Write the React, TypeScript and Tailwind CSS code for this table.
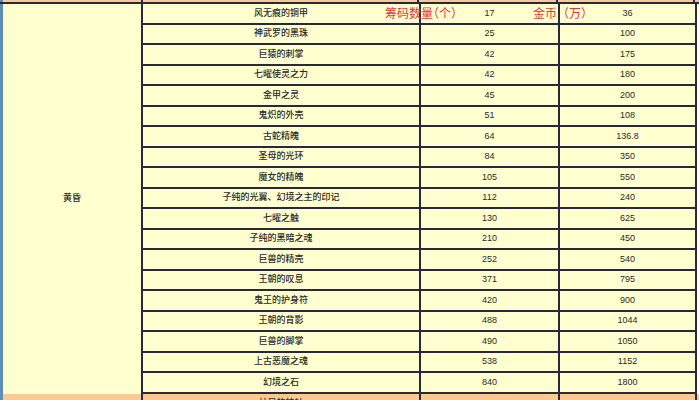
import React from "react";

const rows: [string, string, string][] = [
  ["风无痕的铜甲", "17", "36"],
  ["神武罗的黑珠", "25", "100"],
  ["巨猿的刺掌", "42", "175"],
  ["七曜使灵之力", "42", "180"],
  ["金甲之灵", "45", "200"],
  ["鬼炽的外壳", "51", "108"],
  ["古蛇精魄", "64", "136.8"],
  ["圣母的光环", "84", "350"],
  ["魔女的精魄", "105", "550"],
  ["子纯的光翼、幻境之主的印记", "112", "240"],
  ["七曜之触", "130", "625"],
  ["子纯的黑暗之魂", "210", "450"],
  ["巨兽的精壳", "252", "540"],
  ["王朝的叹息", "371", "795"],
  ["鬼王的护身符", "420", "900"],
  ["王朝的背影", "488", "1044"],
  ["巨兽的脚掌", "490", "1050"],
  ["上古恶魔之魂", "538", "1152"],
  ["幻境之石", "840", "1800"],
];

export default function App() {
  return (
    <div className="relative h-[400px] w-[699px] overflow-hidden bg-[#ffffd0] font-['Liberation_Sans','Noto_Sans_CJK_SC',sans-serif] text-[9px] text-[#2a2a2a]">
      {/* tail of the previous group */}
      <div className="flex h-[2px] bg-[#fbc991]">
        <div className="w-[3px] bg-[#5f8db4]" />
        <div className="w-[138px]" />
        <div className="w-[276px] border-l-2 border-[#262a3c]" />
        <div className="w-[139px] border-l-2 border-[#262a3c]" />
        <div className="w-[139px] border-l-2 border-r-2 border-[#262a3c]" />
      </div>

      <div className="flex border-t-2 border-[#262a3c]">
        <div className="w-[3px] shrink-0 bg-[#5f8db4]" />
        <div className="flex w-[138px] shrink-0 items-center justify-center font-medium">
          黄昏
        </div>
        <div className="flex flex-col">
          {rows.map(([name, chips, gold]) => (
            <div key={name} className="flex h-[20.5px] border-b-2 border-[#262a3c]">
              <div className="flex w-[278px] items-center justify-center border-l-2 border-[#262a3c] font-medium">
                {name}
              </div>
              <div className="flex w-[139px] items-center justify-center border-l-2 border-[#262a3c]">
                {chips}
              </div>
              <div className="flex w-[139px] items-center justify-center border-l-2 border-r-2 border-[#262a3c]">
                {gold}
              </div>
            </div>
          ))}
        </div>
      </div>

      {/* next group, cut off by the window */}
      <div className="flex h-[20px] bg-[#fbc991]">
        <div className="w-[3px] bg-[#5f8db4]" />
        <div className="w-[138px]" />
        <div className="flex w-[278px] items-center justify-center border-l-2 border-[#262a3c] font-medium">
          林风的神针
        </div>
        <div className="flex w-[139px] items-center justify-center border-l-2 border-[#262a3c]">16</div>
        <div className="flex w-[139px] items-center justify-center border-l-2 border-r-2 border-[#262a3c]">44</div>
      </div>

      {/* red annotations written over the sheet */}
      <div className="absolute left-[385px] top-[5px] text-[12px] leading-[16px] text-[#e2383c] [font-feature-settings:'halt'] font-['Noto_Sans_CJK_SC',sans-serif]">
        筹码数量（个）
      </div>
      <div className="absolute left-[533px] top-[5px] text-[12px] leading-[16px] text-[#e2383c] font-['Noto_Sans_CJK_SC',sans-serif]">
        金币（万）
      </div>
    </div>
  );
}
